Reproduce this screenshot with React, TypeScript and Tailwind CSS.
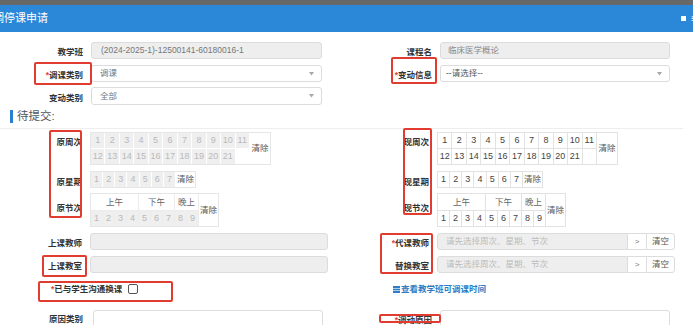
import React from "react";

function WeekGrid({ active }: { active: boolean }) {
  const cells: number[] = [];
  for (let i = 1; i <= 22; i++) cells.push(i);
  return (
    <div
      className={`flex border ${
        active ? "border-[#e2e2e2] bg-[#e2e2e2]" : "border-[#e6e6e6] bg-white"
      }`}
    >
      <div className="grid w-[158px] grid-cols-[repeat(11,minmax(0,1fr))] grid-rows-[15px_15px] gap-px">
        {cells.map((i) => (
          <div
            key={i}
            className={`flex items-center justify-center text-[9px] leading-none ${
              i === 22
                ? "bg-white"
                : active
                ? "bg-white text-[#444]"
                : "bg-[#efefef] text-[#b9b9b9]"
            }`}
          >
            {i === 22 ? "" : i}
          </div>
        ))}
      </div>
      <div className="ml-px flex w-[20px] items-center justify-center bg-white text-[8.5px] text-[#555]">
        清除
      </div>
    </div>
  );
}

function DayGrid({ active }: { active: boolean }) {
  const cells = [1, 2, 3, 4, 5, 6, 7];
  return (
    <div
      className={`flex border ${
        active ? "border-[#e2e2e2] bg-[#e2e2e2]" : "border-[#e6e6e6] bg-white"
      }`}
    >
      <div className="grid h-[15px] w-[84px] grid-cols-[repeat(7,minmax(0,1fr))] gap-px">
        {cells.map((i) => (
          <div
            key={i}
            className={`flex items-center justify-center text-[9px] leading-none ${
              active ? "bg-white text-[#444]" : "bg-[#efefef] text-[#b9b9b9]"
            }`}
          >
            {i}
          </div>
        ))}
      </div>
      <div className="ml-px flex w-[19px] items-center justify-center bg-white text-[8.5px] text-[#555]">
        清除
      </div>
    </div>
  );
}

function SectionGrid({ active }: { active: boolean }) {
  const cells = [1, 2, 3, 4, 5, 6, 7, 8, 9];
  return (
    <div
      className={`flex border ${
        active ? "border-[#e2e2e2] bg-[#e2e2e2]" : "border-[#e6e6e6] bg-[#ececec]"
      }`}
    >
      <div className="grid w-[107px] grid-cols-[repeat(9,minmax(0,1fr))] grid-rows-[16px_15px] gap-px">
        <div className="col-span-4 flex items-center justify-center bg-white text-[8.5px] text-[#666]">
          上午
        </div>
        <div className="col-span-3 flex items-center justify-center bg-white text-[8.5px] text-[#666]">
          下午
        </div>
        <div className="col-span-2 flex items-center justify-center bg-white text-[8.5px] text-[#666]">
          晚上
        </div>
        {cells.map((i) => (
          <div
            key={i}
            className={`flex items-center justify-center text-[9px] leading-none ${
              active ? "bg-white text-[#444]" : "bg-[#efefef] text-[#b9b9b9]"
            }`}
          >
            {i}
          </div>
        ))}
      </div>
      <div className="ml-px flex w-[19px] items-center justify-center bg-white text-[8.5px] text-[#555]">
        清除
      </div>
    </div>
  );
}

function Arrow() {
  return (
    <svg width="5" height="4" viewBox="0 0 5 4" className="shrink-0">
      <path d="M0 0 L5 0 L2.5 3.5 Z" fill="#a8a8a8" />
    </svg>
  );
}

function Req() {
  return <span className="text-[#e0433a]">*</span>;
}

export default function App() {
  const label = "shrink-0 text-right text-[8.5px] font-bold leading-[12px] text-[#333]";
  return (
    <div className="relative h-[325px] w-[693px] overflow-hidden bg-white font-['Liberation_Sans','Noto_Sans_CJK_SC',sans-serif]">
      <div className="h-[5px] bg-[#686868]" />
      <div className="flex h-[27px] items-center justify-between bg-[#2b88d9]">
        <span className="-ml-[7px] text-[11px] leading-none text-white">调停课申请</span>
        <div className="flex items-center">
          <span className="h-[5px] w-[5px] bg-white" />
          <span className="-mr-[4px] ml-[5px] text-[10px] font-bold leading-none text-white">≡</span>
        </div>
      </div>

      <div className="w-[698px] pt-[10px]">
        {/* row 1 */}
        <div className="flex h-[17px]">
          <div className="flex w-[349px] items-center">
            <div className={`${label} w-[83px] pt-[2px]`}>教学班</div>
            <div className="ml-[8px] flex h-[17px] w-[231px] items-center rounded-[3px] border border-[#dcdcdc] bg-[#eeeeee] pl-[9px] text-[8.5px] text-[#777]">
              (2024-2025-1)-12500141-60180016-1
            </div>
          </div>
          <div className="flex w-[349px] items-center">
            <div className={`${label} w-[83px] pt-[2px]`}>课程名</div>
            <div className="ml-[8px] flex h-[17px] w-[230px] items-center rounded-[3px] border border-[#dcdcdc] bg-[#eeeeee] pl-[7px] text-[8.5px] text-[#888]">
              临床医学概论
            </div>
          </div>
        </div>

        {/* row 2 */}
        <div className="mt-[6px] flex h-[17px]">
          <div className="flex w-[349px] items-center">
            <div className={`${label} w-[83px] pt-[2px]`}>
              <Req />
              调课类别
            </div>
            <div className="ml-[8px] flex h-[17px] w-[231px] items-center justify-between rounded-[3px] border border-[#dcdcdc] bg-white pl-[8px] pr-[7px] text-[8.5px] text-[#777]">
              <span>调课</span>
              <Arrow />
            </div>
          </div>
          <div className="flex w-[349px] items-center">
            <div className={`${label} w-[83px] pt-[2px]`}>
              <Req />
              变动信息
            </div>
            <div className="ml-[8px] flex h-[17px] w-[230px] items-center justify-between rounded-[3px] border border-[#dcdcdc] bg-white pl-[5px] pr-[7px] text-[8.5px] text-[#555]">
              <span>--请选择--</span>
              <Arrow />
            </div>
          </div>
        </div>

        {/* row 3 */}
        <div className="mt-[5px] flex h-[18px]">
          <div className="flex w-[349px] items-center">
            <div className={`${label} w-[83px] pt-[3px]`}>变动类别</div>
            <div className="ml-[8px] flex h-[18px] w-[231px] items-center justify-between rounded-[3px] border border-[#dcdcdc] bg-white pl-[8px] pr-[7px] text-[8.5px] text-[#777]">
              <span>全部</span>
              <Arrow />
            </div>
          </div>
        </div>

        {/* section header */}
        <div className="mt-[5px] flex h-[13px] items-center">
          <span className="ml-[10px] h-[13px] w-[3px] bg-[#2b7fd0]" />
          <span className="ml-[4px] text-[11.5px] leading-none text-[#555]">待提交:</span>
        </div>
        <div className="mt-[5px] h-px w-[683px] bg-[#eeeeee]" />

        {/* week row */}
        <div className="mt-[3px] flex">
          <div className="flex w-[349px] items-start">
            <div className={`${label} w-[82px] pt-[4px]`}>原周次</div>
            <div className="ml-[8px]">
              <WeekGrid active={false} />
            </div>
          </div>
          <div className="flex w-[349px] items-start">
            <div className={`${label} w-[80px] pt-[4px]`}>现周次</div>
            <div className="ml-[8px]">
              <WeekGrid active={true} />
            </div>
          </div>
        </div>

        {/* day row */}
        <div className="mt-[6px] flex">
          <div className="flex w-[349px] items-start">
            <div className={`${label} w-[82px] pt-[5px]`}>原星期</div>
            <div className="ml-[8px]">
              <DayGrid active={false} />
            </div>
          </div>
          <div className="flex w-[349px] items-start">
            <div className={`${label} w-[80px] pt-[5px]`}>现星期</div>
            <div className="ml-[8px]">
              <DayGrid active={true} />
            </div>
          </div>
        </div>

        {/* section row */}
        <div className="mt-[5px] flex">
          <div className="flex w-[349px] items-start">
            <div className={`${label} w-[82px] pt-[9px]`}>原节次</div>
            <div className="ml-[8px]">
              <SectionGrid active={false} />
            </div>
          </div>
          <div className="flex w-[349px] items-start">
            <div className={`${label} w-[80px] pt-[9px]`}>现节次</div>
            <div className="ml-[8px]">
              <SectionGrid active={true} />
            </div>
          </div>
        </div>

        {/* teacher row */}
        <div className="mt-[6px] flex h-[17px]">
          <div className="flex w-[349px] items-center">
            <div className={`${label} w-[82px] pt-[2px]`}>上课教师</div>
            <div className="ml-[8px] h-[17px] w-[238px] rounded-[3px] border border-[#dcdcdc] bg-[#eeeeee]" />
          </div>
          <div className="flex w-[349px] items-center">
            <div className={`${label} w-[80px] pt-[2px]`}>
              <Req />
              代课教师
            </div>
            <div className="ml-[8px] flex h-[17px]">
              <div className="flex w-[191px] items-center rounded-l-[3px] border border-[#dcdcdc] bg-[#eeeeee] pl-[8px] text-[8.5px] text-[#bbbbbb]">
                请先选择周次、星期、节次
              </div>
              <div className="flex w-[18px] items-center justify-center border-y border-[#dcdcdc] bg-white text-[8px] text-[#777]">
                &gt;
              </div>
              <div className="flex w-[29px] items-center justify-center rounded-r-[3px] border border-[#dcdcdc] bg-white text-[8.5px] text-[#555]">
                清空
              </div>
            </div>
          </div>
        </div>

        {/* room row */}
        <div className="mt-[6px] flex h-[17px]">
          <div className="flex w-[349px] items-center">
            <div className={`${label} w-[82px] pt-[2px]`}>上课教室</div>
            <div className="ml-[8px] h-[17px] w-[238px] rounded-[3px] border border-[#dcdcdc] bg-[#eeeeee]" />
          </div>
          <div className="flex w-[349px] items-center">
            <div className={`${label} w-[80px] pt-[2px]`}>替换教室</div>
            <div className="ml-[8px] flex h-[17px]">
              <div className="flex w-[191px] items-center rounded-l-[3px] border border-[#dcdcdc] bg-[#eeeeee] pl-[8px] text-[8.5px] text-[#bbbbbb]">
                请先选择周次、星期、节次
              </div>
              <div className="flex w-[18px] items-center justify-center border-y border-[#dcdcdc] bg-white text-[8px] text-[#777]">
                &gt;
              </div>
              <div className="flex w-[29px] items-center justify-center rounded-r-[3px] border border-[#dcdcdc] bg-white text-[8.5px] text-[#555]">
                清空
              </div>
            </div>
          </div>
        </div>

        {/* checkbox / link row */}
        <div className="mt-[11px] flex h-[10px]">
          <div className="flex w-[349px] items-center pl-[51px]">
            <span className="text-[8.5px] font-bold leading-none text-[#333]">
              <Req />
              已与学生沟通换课
            </span>
            <span className="ml-[6px] h-[10px] w-[10px] rounded-[2px] border border-[#555] bg-white" />
          </div>
          <div className="flex w-[349px] items-center pl-[44px]">
            <svg width="7" height="7" viewBox="0 0 7 7" className="shrink-0">
              <rect x="0" y="0" width="7" height="7" fill="#2e7cc4" />
              <rect x="0" y="2" width="7" height="0.8" fill="#cfe2f3" />
              <rect x="0" y="4.2" width="7" height="0.8" fill="#cfe2f3" />
            </svg>
            <span className="ml-[1px] text-[8.5px] font-bold leading-none text-[#2e7cc4]">
              查看教学班可调课时间
            </span>
          </div>
        </div>

        {/* reason row */}
        <div className="mt-[16px] flex">
          <div className="flex w-[349px] items-start">
            <div className={`${label} w-[83px] pt-[3px]`}>原因类别</div>
            <div className="ml-[10px] h-[30px] w-[230px] rounded-[3px] border border-[#dcdcdc] bg-white" />
          </div>
          <div className="flex w-[349px] items-start">
            <div className={`${label} w-[83px] pt-[4px]`}>
              <Req />
              调动原因
            </div>
            <div className="ml-[8px] h-[30px] w-[230px] rounded-[3px] border border-[#dcdcdc] bg-white" />
          </div>
        </div>
      </div>

      {/* red annotation boxes */}
      <div className="pointer-events-none absolute left-[34px] top-[62px] h-[23px] w-[58px] rounded-[2px] border-2 border-[#e23b30]" />
      <div className="pointer-events-none absolute left-[391px] top-[57px] h-[27px] w-[46px] rounded-[2px] border-2 border-[#e23b30]" />
      <div className="pointer-events-none absolute left-[49px] top-[130px] h-[88px] w-[33px] rounded-[2px] border-2 border-[#e23b30]" />
      <div className="pointer-events-none absolute left-[403px] top-[128px] h-[87px] w-[29px] rounded-[2px] border-2 border-[#e23b30]" />
      <div className="pointer-events-none absolute left-[42px] top-[255px] h-[22px] w-[45px] rounded-[2px] border-2 border-[#e23b30]" />
      <div className="pointer-events-none absolute left-[380px] top-[233px] h-[41px] w-[53px] rounded-[2px] border-2 border-[#e23b30]" />
      <div className="pointer-events-none absolute left-[38px] top-[281px] h-[21px] w-[135px] rounded-[2px] border-2 border-[#e23b30]" />
      <div className="pointer-events-none absolute left-[379px] top-[314px] h-[9px] w-[62px] rounded-[2px] border-2 border-[#e23b30]" />
    </div>
  );
}
